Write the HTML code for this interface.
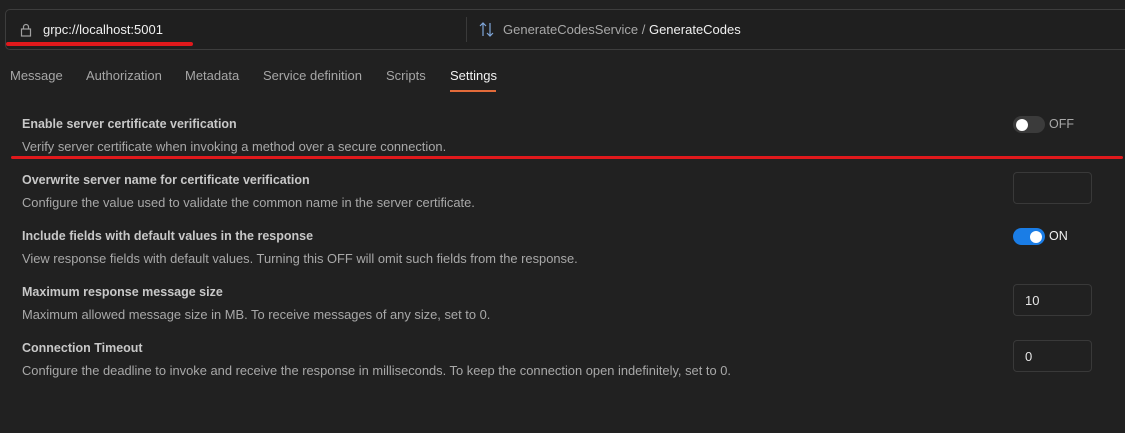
<!DOCTYPE html>
<html><head><style>
body{margin:0;width:1125px;height:433px;background:#212121;font-family:"Liberation Sans",sans-serif;position:relative;overflow:hidden}
.a{position:absolute;white-space:nowrap}
.bar{position:absolute;left:5px;top:9px;width:1140px;height:41px;border:1px solid #3d3d3d;border-radius:5px;background:#1f1f1f;box-sizing:border-box}
.red{position:absolute;background:#e0191c;border-radius:2px}
.tab{position:absolute;top:68px;font-size:13px;color:#a6a6a6}
.t{position:absolute;left:22px;font-size:12.5px;font-weight:bold;color:#c8c8c8}
.d{position:absolute;left:22px;font-size:12.9px;color:#a8a8a8}
.in{position:absolute;left:1013px;width:79px;height:32px;border:1px solid #393939;border-radius:4px;box-sizing:border-box;color:#e6e6e6;font-size:13px;padding:8px 0 0 11px}
.tg{position:absolute;left:1013px;width:32px;height:17px;border-radius:9px}
.k{position:absolute;top:2.5px;width:12px;height:12px;border-radius:50%;background:#fff}
</style></head><body>
<div class="bar"></div>
<svg class="a" style="left:19px;top:23px" width="14" height="14" viewBox="0 0 14 14"><rect x="2.5" y="6" width="9" height="7" fill="none" stroke="#a0a0a0" stroke-width="1.2"/><path d="M4.5 6V4a2.5 2.5 0 0 1 5 0v2" fill="none" stroke="#a0a0a0" stroke-width="1.2"/></svg>
<div class="a" style="left:43px;top:22px;font-size:13px;color:#f0f0f0">grpc://localhost:5001</div>
<div class="red" style="left:6px;top:42px;width:187px;height:4px"></div>
<div class="a" style="left:466px;top:17px;width:1px;height:25px;background:#3a3a3a"></div>
<svg class="a" style="left:479px;top:22px" width="16" height="15" viewBox="0 0 16 15"><path d="M4 14V1M1 4l3-3 3 3M11 1v13M8 11l3 3 3-3" fill="none" stroke="#7fa6d9" stroke-width="1.2"/></svg>
<div class="a" style="left:503px;top:22px;font-size:13px;color:#a8a8a8">GenerateCodesService / <span style="color:#f0f0f0">GenerateCodes</span></div>
<div class="tab" style="left:10px">Message</div>
<div class="tab" style="left:86px">Authorization</div>
<div class="tab" style="left:185px">Metadata</div>
<div class="tab" style="left:263px">Service definition</div>
<div class="tab" style="left:386px">Scripts</div>
<div class="tab" style="left:450px;color:#f2f2f2">Settings</div>
<div class="a" style="left:450px;top:90px;width:46px;height:1.5px;background:#e36b3a"></div>

<div class="t" style="top:117px">Enable server certificate verification</div>
<div class="d" style="top:139px">Verify server certificate when invoking a method over a secure connection.</div>
<div class="red" style="left:11px;top:156px;width:1112px;height:3px"></div>
<div class="tg" style="top:116px;background:#3b3b3b"><div class="k" style="left:3px"></div></div>
<div class="a" style="left:1049px;top:117px;font-size:12.5px;color:#a8a8a8">OFF</div>

<div class="t" style="top:173px">Overwrite server name for certificate verification</div>
<div class="d" style="top:195px">Configure the value used to validate the common name in the server certificate.</div>
<div class="in" style="top:172px"></div>

<div class="t" style="top:229px">Include fields with default values in the response</div>
<div class="d" style="top:251px">View response fields with default values. Turning this OFF will omit such fields from the response.</div>
<div class="tg" style="top:228px;background:#1a7de6"><div class="k" style="left:17px"></div></div>
<div class="a" style="left:1049px;top:229px;font-size:12.5px;color:#f0f0f0">ON</div>

<div class="t" style="top:285px">Maximum response message size</div>
<div class="d" style="top:307px">Maximum allowed message size in MB. To receive messages of any size, set to 0.</div>
<div class="in" style="top:284px">10</div>

<div class="t" style="top:341px">Connection Timeout</div>
<div class="d" style="top:363px">Configure the deadline to invoke and receive the response in milliseconds. To keep the connection open indefinitely, set to 0.</div>
<div class="in" style="top:340px">0</div>
</body></html>
